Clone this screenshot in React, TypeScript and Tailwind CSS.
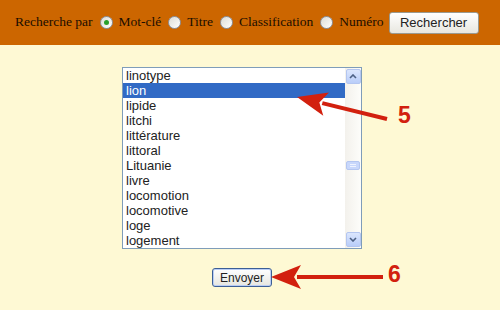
import React from 'react';

const words = [
  'linotype',
  'lion',
  'lipide',
  'litchi',
  'littérature',
  'littoral',
  'Lituanie',
  'livre',
  'locomotion',
  'locomotive',
  'loge',
  'logement',
];

const Radio: React.FC<{ checked?: boolean }> = ({ checked }) => (
  <span className="inline-flex h-[13px] w-[13px] shrink-0 items-center justify-center rounded-full border border-[#8a96a8] bg-gradient-to-br from-[#dcdcd6] to-white">
    {checked && <span className="h-[5px] w-[5px] rounded-full bg-[#2aa02a]" />}
  </span>
);

const Option: React.FC<{ label: string; checked?: boolean }> = ({ label, checked }) => (
  <label className="flex shrink-0 items-center gap-[6px] whitespace-nowrap">
    <Radio checked={checked} />
    <span>{label}</span>
  </label>
);

const ScrollButton: React.FC<{ up?: boolean }> = ({ up }) => (
  <div className="flex h-[15px] w-[15px] items-center justify-center rounded-[2px] border border-[#b4c6f0] bg-gradient-to-b from-[#dbe6fd] to-[#b9cdf9]">
    <svg width="8" height="5" viewBox="0 0 8 5">
      <path
        d={up ? 'M1 4 L4 1 L7 4' : 'M1 1 L4 4 L7 1'}
        fill="none"
        stroke="#4d6185"
        strokeWidth="1.6"
      />
    </svg>
  </div>
);

const Arrow: React.FC<{ x1: number; y1: number; x2: number; y2: number }> = ({ x1, y1, x2, y2 }) => {
  const ang = Math.atan2(y2 - y1, x2 - x1);
  const len = 30;
  const half = 12;
  const bx = x2 - len * Math.cos(ang);
  const by = y2 - len * Math.sin(ang);
  const px = -Math.sin(ang) * half;
  const py = Math.cos(ang) * half;
  return (
    <g>
      <line x1={x1} y1={y1} x2={bx + 4 * Math.cos(ang)} y2={by + 4 * Math.sin(ang)} stroke="#d2200e" strokeWidth="4" />
      <polygon
        points={`${x2},${y2} ${bx + px},${by + py} ${bx + 7 * Math.cos(ang)},${by + 7 * Math.sin(ang)} ${bx - px},${by - py}`}
        fill="#d2200e"
      />
    </g>
  );
};

export default function App() {
  return (
    <div className="relative h-[310px] w-[500px] overflow-hidden bg-[#fef9d4]">
      <div className="flex h-[45px] items-center gap-[7px] whitespace-nowrap bg-[#cc6600] pl-[15px] font-['Liberation_Serif',serif] text-[13.5px] text-[#1a0d00]">
        <span className="shrink-0">Recherche par</span>
        <Option label="Mot-clé" checked />
        <Option label="Titre" />
        <Option label="Classification" />
        <Option label="Numéro" />
        <button className="ml-[-2px] h-[22px] w-[90px] shrink-0 rounded-[3px] border border-[#9a9a90] bg-gradient-to-b from-white to-[#e8e7e0] font-['Liberation_Sans',sans-serif] text-[13px] text-[#222]">
          Rechercher
        </button>
      </div>

      <div className="ml-[122px] mt-[22px] flex w-[240px] flex-col items-center">
        <div className="flex h-[182px] w-[240px] border border-[#7f9db9] bg-white">
          <ul className="flex-1 font-['Liberation_Sans',sans-serif] text-[13px] leading-[15px] text-[#222]">
            {words.map((w) => (
              <li
                key={w}
                className={
                  w === 'lion'
                    ? 'h-[15px] bg-[#316ac5] pl-[3px] text-white'
                    : 'h-[15px] pl-[3px]'
                }
              >
                {w}
              </li>
            ))}
          </ul>
          <div className="flex w-[16px] flex-col items-center bg-gradient-to-r from-[#f3f1ec] to-[#fdfdfa] py-[1px]">
            <ScrollButton up />
            <div className="flex-1 pt-[77px]">
              <div className="flex h-[9px] w-[14px] flex-col items-center justify-center gap-[1px] rounded-[2px] border border-[#b4c6f0] bg-[#c8d7fb]">
                <span className="h-px w-[6px] bg-[#eef3ff]" />
                <span className="h-px w-[6px] bg-[#eef3ff]" />
              </div>
            </div>
            <ScrollButton />
          </div>
        </div>

        <button className="mt-[19px] h-[19px] w-[60px] rounded-[3px] border border-[#3c5f96] bg-gradient-to-b from-white to-[#e6e6e0] font-['Liberation_Sans',sans-serif] text-[12px] leading-none text-[#222] shadow-[inset_0_0_0_1px_#b9cdf5]">
          Envoyer
        </button>
      </div>

      <svg className="pointer-events-none absolute left-0 top-0" width="500" height="310">
        <Arrow x1={387} y1={119} x2={297} y2={97} />
        <Arrow x1={383} y1={277} x2={271} y2={277} />
      </svg>
      <span className="absolute left-[398px] top-[104px] font-['Liberation_Sans',sans-serif] text-[23px] font-bold leading-none text-[#d2200e]">
        5
      </span>
      <span className="absolute left-[388px] top-[263px] font-['Liberation_Sans',sans-serif] text-[23px] font-bold leading-none text-[#d2200e]">
        6
      </span>
    </div>
  );
}
